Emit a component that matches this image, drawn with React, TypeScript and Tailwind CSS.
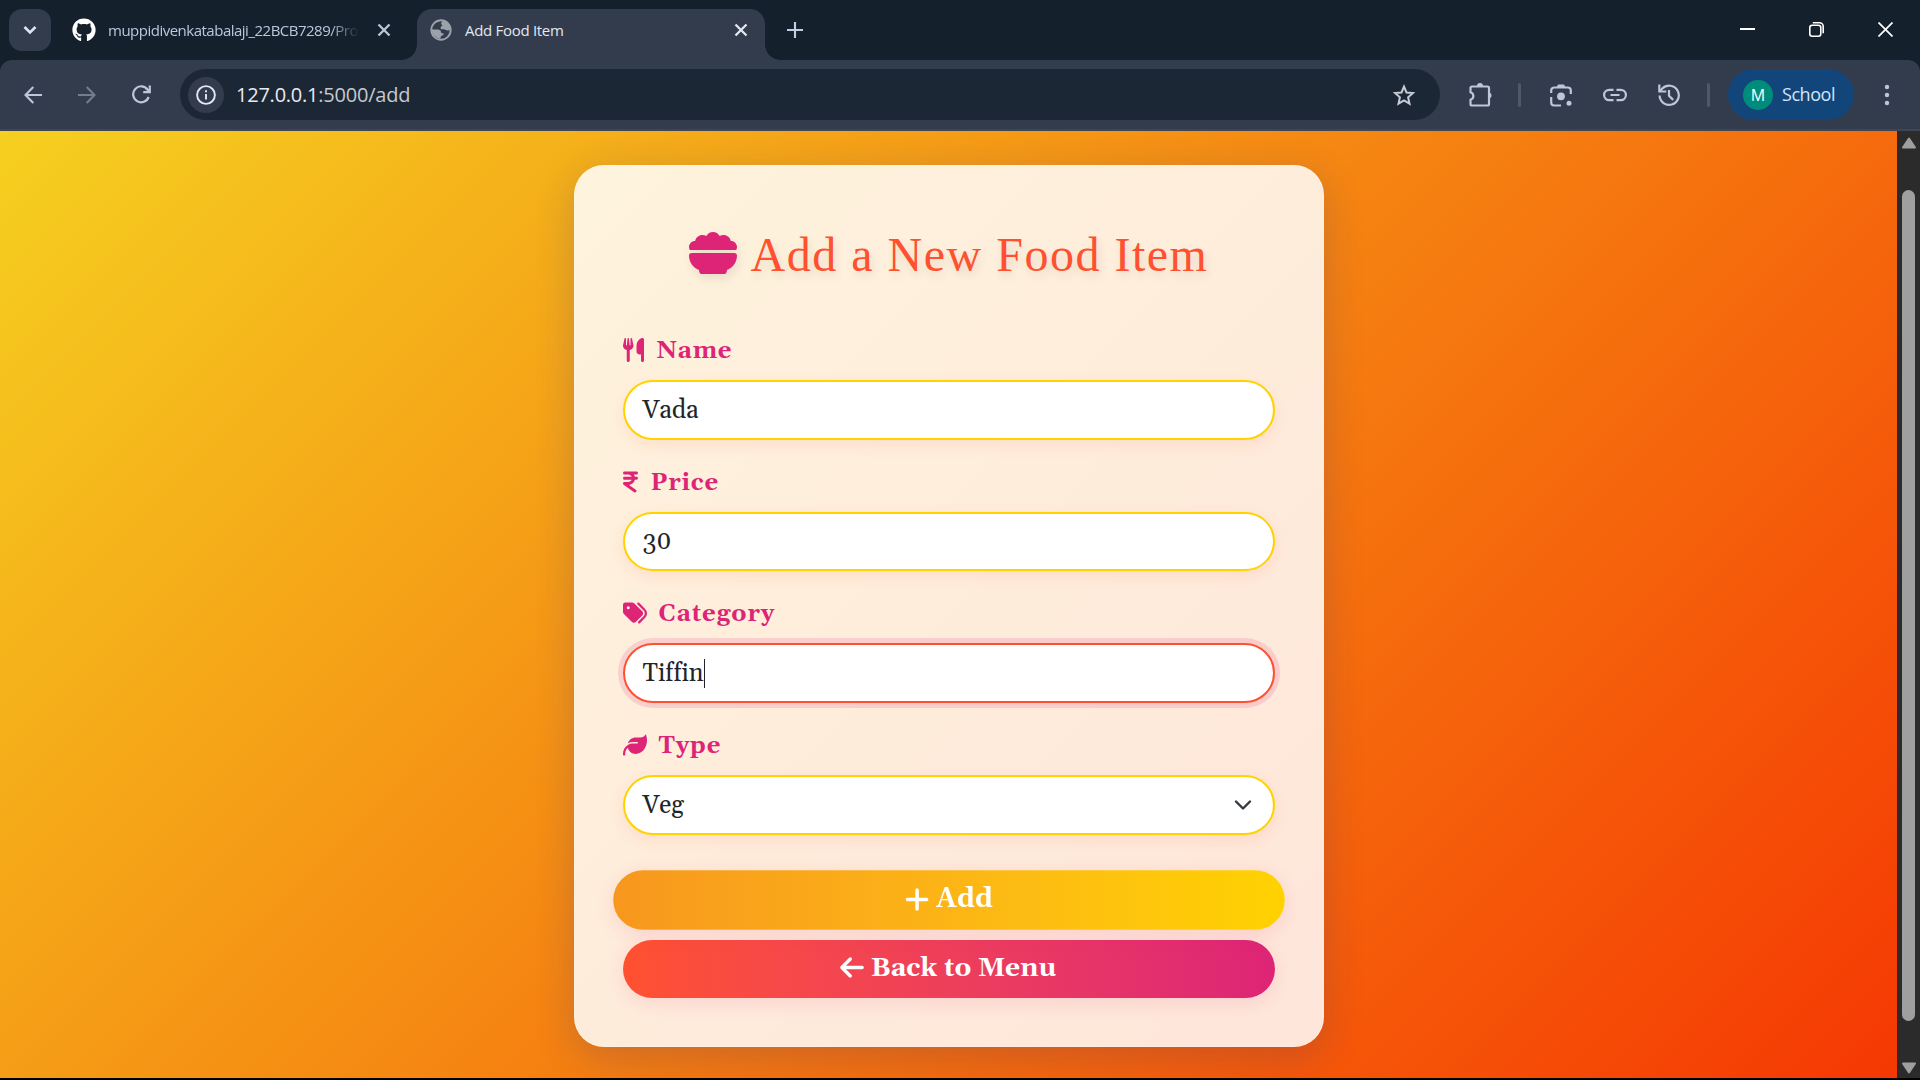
import type { ReactNode } from "react";
import {
  FaArrowLeft,
  FaBowlFood,
  FaGithub,
  FaIndianRupeeSign,
  FaLeaf,
  FaPlus,
  FaTags,
  FaUtensils,
} from "react-icons/fa6";

function Cross({ className }: { className: string }) {
  return (
    <svg viewBox="0 0 14 14" className={className} fill="none" stroke="currentColor" strokeWidth="2.3">
      <path d="M1.5 1.5l11 11M12.5 1.5l-11 11" />
    </svg>
  );
}

function TabStrip() {
  return (
    <div className="flex h-[60px] items-start bg-[#15202d] pl-[9px]">
      <button className="mt-[9px] flex h-[42px] w-[42px] items-center justify-center rounded-[13px] bg-[#323c4d]">
        <svg viewBox="0 0 14 10" className="h-[10px] w-[14px]" fill="none" stroke="#dfe4ee" strokeWidth="2.6">
          <path d="M1.5 2l5.500 5.500L12.500 2" />
        </svg>
      </button>
      <div className="ml-[21px] flex h-[60px] w-[345px] items-center text-[#bcc6dc]">
        <FaGithub className="size-6 text-white" />
        <div className="ml-3 w-[251px] overflow-hidden [mask-image:linear-gradient(90deg,#000_222px,transparent_251px)]">
          <span className="text-[15px] tracking-[-0.5px] whitespace-nowrap">muppidivenkatabalaji_22BCB7289/Pro</span>
        </div>
        <Cross className="ml-[18px] size-[14px]" />
      </div>
      <div className="relative mt-[9px] flex h-[51px] w-[348px] items-center rounded-t-[15px] bg-[#323c4d] pb-[9px] text-[#e3e7f0]">
        <span className="absolute bottom-0 -left-[15px] size-[15px] bg-[radial-gradient(circle_at_0_0,transparent_14.500px,#323c4d_15px)]" />
        <span className="absolute bottom-0 -right-[15px] size-[15px] bg-[radial-gradient(circle_at_100%_0,transparent_14.500px,#323c4d_15px)]" />
        <svg viewBox="0 0 22 22" className="ml-[13px] size-[22px] text-[#9ca2aa]">
          <circle cx="11" cy="11" r="9.7" fill="none" stroke="currentColor" strokeWidth="1.9" />
          <path fill="currentColor" d="M12.500 2C11 4 10.500 4.500 12 6c1.300 1.200-1.500 1.300-1.500 3 0 1.200 1.500 1.400 3 1.200 2-.2 2.500 1.300 4 1.300 1.300 0 2.500-.3 3-1A10 10 0 0 0 12.500 2z" />
          <path fill="currentColor" d="M1.500 10.500h6c2.300 0 3.500 1 3.500 2.500 0 1 .8 1.200 2 1.300 1.300.2.8 1.700-.2 2-1.500.5-2.300 1.200-2.300 3.500-4-.3-8.500-4-9-9.300z" />
        </svg>
        <span className="ml-[13px] text-[15px] tracking-[-0.3px]">Add Food Item</span>
        <Cross className="ml-auto mr-[17px] size-[14px]" />
      </div>
      <svg viewBox="0 0 16 16" className="mt-[22px] ml-[22px] size-4" fill="none" stroke="#c3cde4" strokeWidth="2.1">
        <path d="M8 0v16M0 8h16" />
      </svg>
      <div className="ml-auto flex h-[59px] items-center gap-[54px] pr-[27px] text-white">
        <svg viewBox="0 0 15 15" className="size-[15px]" stroke="currentColor" strokeWidth="2">
          <path d="M0 7h15" />
        </svg>
        <svg viewBox="0 0 15 15" className="size-[15px]" fill="none" stroke="currentColor" strokeWidth="1.6">
          <rect x=".8" y="3.200" width="11" height="11" rx="2.400" />
          <path d="M3.800.8h6.700a3.700 3.700 0 0 1 3.700 3.700v6.700" />
        </svg>
        <svg viewBox="0 0 15 15" className="size-[15px]" fill="none" stroke="currentColor" strokeWidth="1.7">
          <path d="M.5.5l14 14M14.500.5l-14 14" />
        </svg>
      </div>
    </div>
  );
}

function Toolbar() {
  return (
    <div className="bg-[#15202d]">
      <div className="flex h-[71px] items-center rounded-t-[12px] border-b-2 border-[#3f4652] bg-[#323c4d] pl-6 text-[#bcc6dc]">
        <svg viewBox="0 0 18 18" className="size-[18px]" fill="none" stroke="currentColor" strokeWidth="2.1">
          <path d="M18 9H1.500M9.300 1L1.500 9l7.800 8" />
        </svg>
        <svg viewBox="0 0 18 18" className="ml-9 size-[18px] text-[#747d8d]" fill="none" stroke="currentColor" strokeWidth="2.1">
          <path d="M0 9h16.500M8.700 1l7.800 8-7.800 8" />
        </svg>
        <svg viewBox="0 0 19 19" className="ml-9 size-[19px]" fill="none" stroke="currentColor" strokeWidth="2.200">
          <path d="M16.700 12A8 8 0 1 1 15.600 4.500" />
          <path d="M17.800.5v6.600h-6.600M17.800 7.100L13.800 3" />
        </svg>
        <div className="ml-[29px] flex h-[51px] w-[1260px] items-center rounded-full bg-[#1c2736] pl-2 pr-6">
          <span className="flex size-9 items-center justify-center rounded-full bg-[#323c4d]">
            <svg viewBox="0 0 20 20" className="size-5" fill="none" stroke="#e3e7f0" strokeWidth="1.9">
              <circle cx="10" cy="10" r="8.900" />
              <path d="M10 9v5.500M10 5.300v2" />
            </svg>
          </span>
          <span className="ml-3 text-[20px] tracking-[-0.23px] text-[#e8eaf0]">
            127.0.0.1<span className="text-[#c6c9cf]">:5000/add</span>
          </span>
          <svg viewBox="0 0 24 24" className="ml-auto size-6" fill="none" stroke="#c7cbd3" strokeWidth="2">
            <path d="M12 3.600l2.500 5.900 6.400.6-4.800 4.200 1.400 6.300-5.500-3.300-5.500 3.300 1.400-6.300-4.800-4.200 6.400-.6z" />
          </svg>
        </div>
        <svg viewBox="0 0 26 26" className="ml-[28px] size-[26px]" fill="none" stroke="currentColor" strokeWidth="2.200">
          <path d="M4 4.500h15.500a1.500 1.500 0 0 1 1.500 1.500v16a1.500 1.500 0 0 1-1.500 1.500H4A1.500 1.500 0 0 1 2.500 22v-4.200c3.800-1.200 3.800-6.400 0-7.600V6A1.500 1.500 0 0 1 4 4.500z" />
          <path d="M9 4a3 3 0 0 1 6 0zM21.500 10.500a3.200 3.200 0 0 1 0 6z" fill="currentColor" stroke="none" />
        </svg>
        <span className="ml-6 h-6 w-[3px] rounded-full bg-[#4d5869]" />
        <svg viewBox="0 0 24 24" className="ml-[28px] size-6" fill="none" stroke="currentColor" strokeWidth="2.200">
          <path d="M2.200 10V7.500a3 3 0 0 1 3-3h13.600a3 3 0 0 1 3 3V11M2.200 14v5.500a3 3 0 0 0 3 3H12" />
          <path d="M7.500 4.300L9 1.500h6l1.500 2.800z" fill="currentColor" stroke="none" />
          <circle cx="12" cy="13.300" r="3.900" fill="currentColor" stroke="none" />
          <circle cx="20" cy="20.200" r="2.500" fill="currentColor" stroke="none" />
        </svg>
        <svg viewBox="0 0 24 14" className="ml-[30px] h-[14px] w-6" fill="none" stroke="currentColor" strokeWidth="2.200">
          <path d="M10.500 1.800H6.300a5.200 5.200 0 0 0 0 10.400h4.200M13.500 1.800h4.200a5.200 5.200 0 0 1 0 10.400h-4.200M7.500 7h9" />
        </svg>
        <svg viewBox="0 0 24 24" className="ml-[30px] size-6" fill="none" stroke="currentColor" strokeWidth="2.200">
          <path d="M2.600 12.500a9.600 9.600 0 1 0 2.700-6.900L2.500 8.500" />
          <path d="M2.300 1.500v7h7M12 7v5.700l4.200 4.200" />
        </svg>
        <span className="ml-[26px] h-6 w-[3px] rounded-full bg-[#4d5869]" />
        <div className="ml-[18px] flex h-[51px] w-[126px] items-center rounded-full bg-[#12467b] pl-[15px] text-[#d6e3f8]">
          <span className="flex size-[30px] items-center justify-center rounded-full bg-[#008c7a] text-[16px] text-white">M</span>
          <span className="ml-[9px] text-[18px] tracking-[-0.45px]">School</span>
        </div>
        <svg viewBox="0 0 6 22" className="ml-[30px] h-[22px] w-[6px]" fill="currentColor">
          <circle cx="3" cy="3" r="2.200" />
          <circle cx="3" cy="11" r="2.200" />
          <circle cx="3" cy="19" r="2.200" />
        </svg>
      </div>
    </div>
  );
}

const control =
  "flex h-[59.5px] items-center rounded-full border-2 bg-white pl-[18px] pr-5 text-[25px] text-[#212529] [font-variant-ligatures:none]";

function Field({
  icon,
  label,
  value,
  focused = false,
  trailing,
}: {
  icon: ReactNode;
  label: string;
  value: string;
  focused?: boolean;
  trailing?: ReactNode;
}) {
  return (
    <div className="mb-[26.2px]">
      <div className="mb-3 flex h-[34px] items-center text-[24px] font-bold tracking-[0.85px] text-[#dd2476]">
        <span className="pb-0.5">{icon}</span>
        <span>{label}</span>
      </div>
      <div
        className={
          focused
            ? `${control} border-[#ff512f] shadow-[0_0_0_5px_rgba(221,36,118,0.15)]`
            : `${control} border-[#ffd200] shadow-[0_5px_15px_rgba(255,81,47,0.1)]`
        }
      >
        <span className="pt-[3px]">{value}</span>
        {focused && <span className="h-[29px] w-px bg-[#212529]" />}
        {trailing}
      </div>
    </div>
  );
}

function FoodForm() {
  return (
    <div className="mt-[34px] h-[882px] w-[750px] shrink-0 rounded-[30px] border border-white/20 bg-white/85 px-12 pt-12 shadow-[0_10px_40px_rgba(31,38,135,0.2)]">
      <h1 className="flex h-[82px] items-center justify-center font-['Liberation_Serif',serif] text-[48px] tracking-[1.5px] text-[#ff512f] [text-shadow:2px_5px_10px_rgba(0,0,0,0.1)]">
        <FaBowlFood className="mr-[14px] mb-[5px] size-12 text-[#dd2476] drop-shadow-[2px_5px_5px_rgba(0,0,0,0.08)]" />
        Add a New Food Item
      </h1>
      <div className="mt-[38px]">
        <Field icon={<FaUtensils className="mr-[13px] h-6 w-[21px]" />} label="Name" value="Vada" />
        <Field icon={<FaIndianRupeeSign className="mr-[13px] h-6 w-[15px]" />} label="Price" value="30" />
        <Field icon={<FaTags className="mr-3 h-6 w-6" />} label="Category" value="Tiffin" focused />
        <Field
          icon={<FaLeaf className="mr-3 size-6" />}
          label="Type"
          value="Veg"
          trailing={
            <svg viewBox="0 0 20 20" className="ml-auto size-5" fill="none" stroke="#343a40" strokeWidth="2.400" strokeLinecap="round" strokeLinejoin="round">
              <path d="M3 6.500l7 7 7-7" />
            </svg>
          }
        />
      </div>
      <button className="mt-9 flex h-[58px] w-full scale-[1.03] items-center justify-center gap-[6px] rounded-full bg-linear-to-r from-[#f7971e] to-[#ffd200] text-[26.5px] font-bold text-white shadow-[0_5px_20px_rgba(221,36,118,0.12)]">
        <FaPlus className="mb-0.5 h-[27px] w-[24px]" />
        Add
      </button>
      <button className="mt-[11px] flex h-[58px] w-full items-center justify-center gap-[6px] rounded-full bg-linear-to-r from-[#ff512f] to-[#dd2476] text-[26.5px] font-bold text-white shadow-[0_5px_20px_rgba(221,36,118,0.12)]">
        <FaArrowLeft className="mb-0.5 h-[27px] w-[24px]" />
        Back to Menu
      </button>
    </div>
  );
}

function Scrollbar() {
  return (
    <div className="flex w-[23px] flex-col items-center bg-[#2b2b2b] pt-[6px] pb-1">
      <svg viewBox="0 0 16 12" className="h-3 w-4" fill="#9f9f9f" stroke="#9f9f9f" strokeWidth="2" strokeLinejoin="round">
        <path d="M8 1.500L14 10.500H2z" />
      </svg>
      <span className="mt-[41px] h-[831px] w-[13px] rounded-full bg-[#9f9f9f]" />
      <svg viewBox="0 0 16 12" className="mt-auto h-3 w-4" fill="#9f9f9f" stroke="#9f9f9f" strokeWidth="2" strokeLinejoin="round">
        <path d="M8 10.500L2 1.500h12z" />
      </svg>
    </div>
  );
}

export default function App() {
  return (
    <div className="flex h-[1080px] w-[1920px] flex-col overflow-hidden bg-black font-['Open_Sans','Noto_Sans',sans-serif]">
      <TabStrip />
      <Toolbar />
      <div className="flex h-[947px]">
        <main className="flex w-[1897px] justify-center overflow-hidden bg-[linear-gradient(135deg,#f5d020_0%,#f53803_100%)] font-[Gelasio,Georgia,'Liberation_Serif',serif]">
          <FoodForm />
        </main>
        <Scrollbar />
      </div>
    </div>
  );
}
